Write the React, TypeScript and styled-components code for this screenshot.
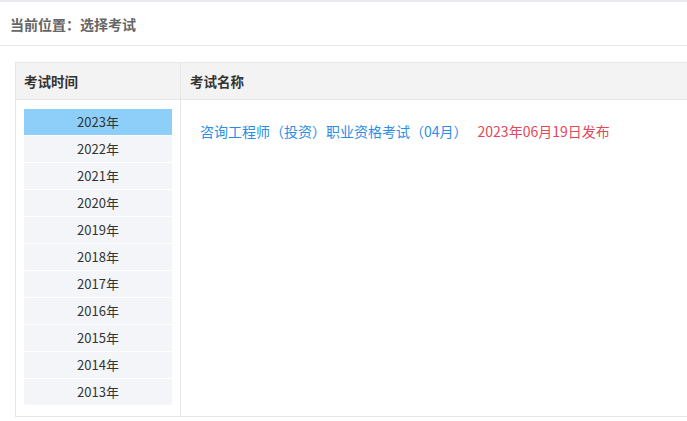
import React from "react";
import styled, { createGlobalStyle } from "styled-components";

const Global = createGlobalStyle`
  html, body { margin: 0; padding: 0; background: #fff; overflow: hidden; }
  body { font-family: "Noto Sans CJK SC", "Noto Sans", sans-serif; }
`;

const Page = styled.div`
  border-top: 2px solid #e8eaed;
  width: 687px;
  overflow: hidden;
`;

const Breadcrumb = styled.div`
  height: 43px;
  display: flex;
  align-items: center;
  padding-left: 10px;
  border-bottom: 1px solid #e8e8e8;
  font-size: 14px;
  font-weight: bold;
  color: #666;
`;

const Content = styled.div`
  padding: 16px 0 0 15px;
`;

const Table = styled.div`
  width: 720px;
  border: 1px solid #e6e6e6;
  display: grid;
  grid-template-columns: 164px 1fr;
`;

const HeadCell = styled.div<{ $first?: boolean }>`
  height: 36px;
  display: flex;
  align-items: center;
  padding-left: ${(p) => (p.$first ? "8px" : "9px")};
  background: #f3f3f3;
  border-bottom: 1px solid #e6e6e6;
  border-left: ${(p) => (p.$first ? "none" : "1px solid #e6e6e6")};
  font-size: 13.5px;
  font-weight: bold;
  color: #333;
`;

const YearCol = styled.div`
  padding: 9px 8px 11px;
`;

const YearList = styled.ul`
  list-style: none;
  margin: 0;
  padding: 0;
  display: flex;
  flex-direction: column;
  gap: 1px;
`;

const Year = styled.li<{ $active?: boolean }>`
  height: 26px;
  display: flex;
  align-items: center;
  justify-content: center;
  padding-bottom: 1px;
  box-sizing: border-box;
  font-size: 13px;
  color: #333;
  background: ${(p) => (p.$active ? "#8dcff9" : "#f4f5f9")};
`;

const ExamCol = styled.div`
  border-left: 1px solid #e6e6e6;
  padding: 20px 0 0 19px;
`;

const ExamRow = styled.div`
  display: flex;
  align-items: center;
  gap: 10px;
  height: 22px;
  font-size: 14px;
`;

const ExamLink = styled.a`
  color: #2b8ee6;
  text-decoration: none;
`;

const ExamDate = styled.span`
  color: #e5475a;
`;

const years = [2023, 2022, 2021, 2020, 2019, 2018, 2017, 2016, 2015, 2014, 2013];

export default function App() {
  return (
    <>
      <Global />
      <Page>
        <Breadcrumb>当前位置：选择考试</Breadcrumb>
        <Content>
          <Table>
            <HeadCell $first>考试时间</HeadCell>
            <HeadCell>考试名称</HeadCell>
            <YearCol>
              <YearList>
                {years.map((y, i) => (
                  <Year key={y} $active={i === 0}>
                    {y}年
                  </Year>
                ))}
              </YearList>
            </YearCol>
            <ExamCol>
              <ExamRow>
                <ExamLink href="#">咨询工程师（投资）职业资格考试（04月）</ExamLink>
                <ExamDate>2023年06月19日发布</ExamDate>
              </ExamRow>
            </ExamCol>
          </Table>
        </Content>
      </Page>
    </>
  );
}
